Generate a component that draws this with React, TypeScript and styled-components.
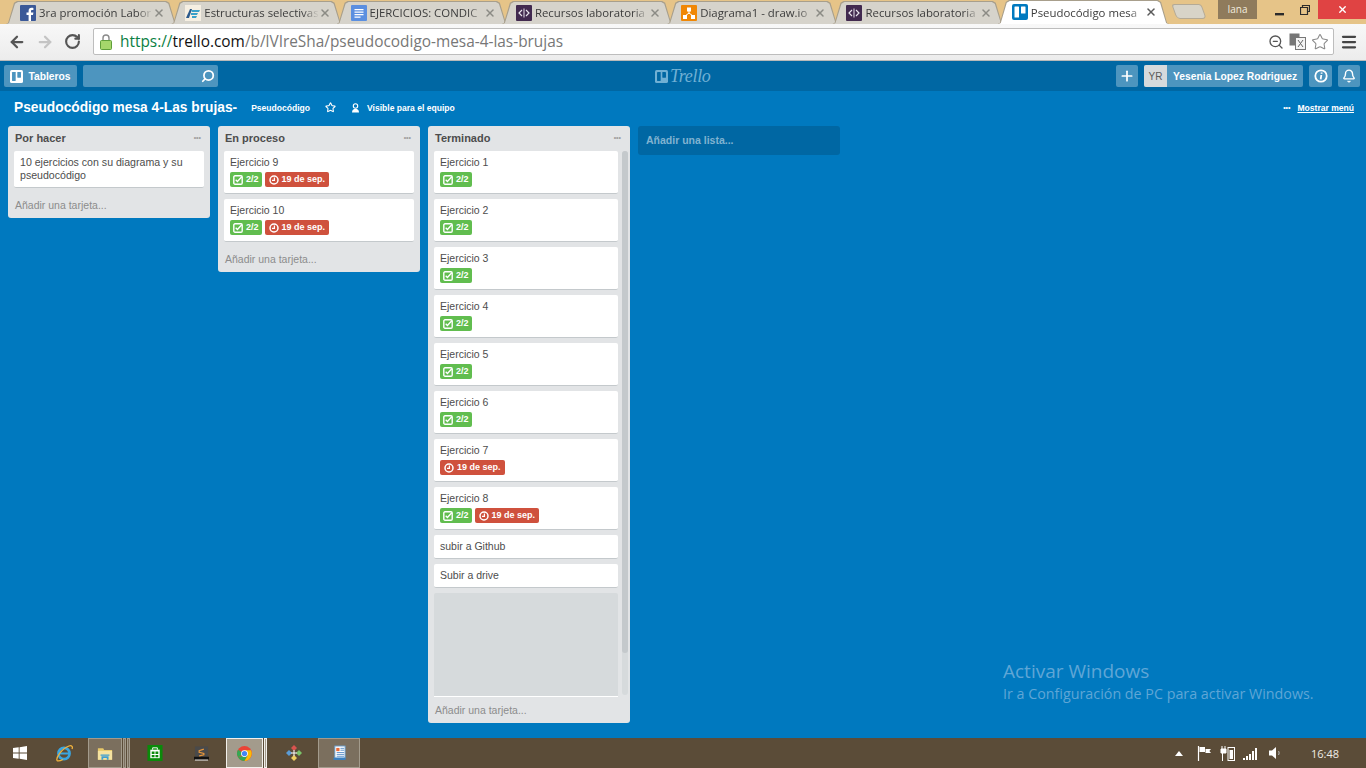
import * as React from 'react';
import styled, { createGlobalStyle } from 'styled-components';
import { Search, ZoomOut, Star, Menu, ArrowLeft, ArrowRight, RotateCw, Plus, Bell, X } from 'lucide-react';

const GlobalStyle = createGlobalStyle`
  html, body { margin: 0; padding: 0; height: 100%; overflow: hidden; }
  body { font-family: "Liberation Sans", Arial, sans-serif; background: #0079bf; }
  * { box-sizing: border-box; }
`;

const Page = styled.div`
  display: flex;
  flex-direction: column;
  width: 1366px;
  height: 768px;
  position: relative;
  overflow: hidden;
`;

/* ---------- browser chrome ---------- */

const TabStrip = styled.div`
  display: flex;
  align-items: flex-end;
  height: 24px;
  flex-shrink: 0;
  padding-left: 6px;
  background: #e6c488;
  position: relative;
`;

const TabItem = styled.div<{ $active?: boolean }>`
  position: relative;
  flex-shrink: 0;
  width: 171.3px;
  height: ${(p) => (p.$active ? '24px' : '23px')};
  margin-right: -6px;
  display: flex;
  align-items: center;
  padding: 0 12px 0 14px;
  z-index: ${(p) => (p.$active ? 2 : 1)};

  &::before,
  &::after {
    content: '';
    position: absolute;
    clip-path: polygon(0 100%, 2px 96%, 8px 8%, 11px 0, calc(100% - 11px) 0, calc(100% - 8px) 8%, calc(100% - 2px) 96%, 100% 100%);
    z-index: -1;
  }
  &::before {
    inset: 0;
    background: #a89f8c;
  }
  &::after {
    inset: 1px 1px 0 1px;
    background: ${(p) => (p.$active ? '#ffffff' : '#d6d3cb')};
  }
`;

const TabIcon = styled.span`
  display: flex;
  width: 16px;
  height: 16px;
  flex-shrink: 0;
  margin-right: 3px;
`;

const TabTitle = styled.span`
  flex: 1;
  min-width: 0;
  padding-right: 6px;
  font-family: "Open Sans", "Noto Sans", sans-serif;
  font-size: 11.4px;
  color: #3c3c3c;
  white-space: nowrap;
  overflow: hidden;
  -webkit-mask-image: linear-gradient(to right, #000 86%, transparent 100%);
  mask-image: linear-gradient(to right, #000 86%, transparent 100%);
`;

const TabClose = styled.span<{ $active?: boolean }>`
  display: flex;
  width: 12px;
  flex-shrink: 0;
  color: ${(p) => (p.$active ? '#5a5a5a' : '#8b8b85')};
`;

const NewTab = styled.div`
  flex-shrink: 0;
  width: 30px;
  height: 15px;
  margin: 0 0 5px 11px;
  background: #d8d4c8;
  border: 1px solid #b4aa96;
  border-radius: 3px 3px 4px 4px;
  transform: skewX(20deg);
`;

const WindowControls = styled.div`
  position: absolute;
  top: 0;
  right: 0;
  display: flex;
  align-items: flex-start;
`;

const ProfileBadge = styled.div`
  width: 39px;
  height: 19px;
  margin-right: 9px;
  background: #8f7b5c;
  color: #f2ecdf;
  font-family: "Open Sans", sans-serif;
  font-size: 10px;
  line-height: 18px;
  text-align: center;
`;

const WinButton = styled.div<{ $close?: boolean }>`
  display: flex;
  align-items: center;
  justify-content: center;
  width: ${(p) => (p.$close ? '48px' : '26px')};
  height: 19px;
  background: ${(p) => (p.$close ? '#e04343' : 'transparent')};
  color: ${(p) => (p.$close ? '#ffffff' : '#2b2b2b')};
`;

const Toolbar = styled.div`
  display: flex;
  align-items: center;
  height: 37px;
  flex-shrink: 0;
  padding: 0 8px 1px 8px;
  background: linear-gradient(#f8f8f8, #ececec);
  border-bottom: 1px solid #b9b9b9;
`;

const NavButton = styled.span<{ $disabled?: boolean }>`
  display: flex;
  width: 20px;
  margin-right: 8px;
  color: ${(p) => (p.$disabled ? '#c4c4c4' : '#555555')};
`;

const Omnibox = styled.div`
  flex: 1;
  display: flex;
  align-items: center;
  height: 27px;
  margin-left: 1px;
  padding: 0 4px 0 6px;
  background: #ffffff;
  border: 1px solid #bdbdbd;
  border-radius: 2px;
`;

const LockIcon = styled.span`
  display: flex;
  margin-right: 8px;
`;

const Url = styled.span`
  flex: 1;
  font-family: "Open Sans", "Noto Sans", sans-serif;
  font-size: 15.4px;
  color: #777777;
  white-space: nowrap;
`;

const UrlScheme = styled.span`
  color: #0b8043;
`;

const UrlHost = styled.span`
  color: #111111;
`;

const OmniIcons = styled.span`
  display: flex;
  align-items: center;
  gap: 5px;
  color: #555555;
`;

const TranslateIcon = styled.span`
  display: flex;
`;

const MenuButton = styled.span`
  display: flex;
  margin-left: 6px;
  color: #444444;
`;

/* ---------- trello header ---------- */

const AppHeader = styled.header`
  display: flex;
  align-items: center;
  justify-content: space-between;
  height: 30px;
  flex-shrink: 0;
  padding: 0 6px 0 4px;
  background: #0067a3;
  position: relative;
`;

const HeaderGroup = styled.div`
  display: flex;
  align-items: center;
  gap: 6px;
`;

const HeaderButton = styled.div<{ $width?: number }>`
  display: flex;
  align-items: center;
  justify-content: center;
  gap: 5px;
  height: 22px;
  width: ${(p) => (p.$width ? `${p.$width}px` : 'auto')};
  border-radius: 2px;
  background: #4d95bf;
  color: #ffffff;
  font-size: 10.3px;
  font-weight: 700;
  overflow: hidden;
`;

const SearchBox = styled(HeaderButton)`
  justify-content: flex-end;
  padding-right: 3px;
`;

const SearchGlyph = styled(Search)`
  transform: scaleX(-1);
`;

const Logo = styled.div`
  position: absolute;
  left: 655px;
  top: 7px;
  display: flex;
  align-items: center;
  gap: 2px;
  color: #70b0d4;
  font-family: "Liberation Serif", serif;
  font-style: italic;
  font-size: 18px;
  line-height: 16px;
  letter-spacing: -0.3px;
`;

const UserChip = styled(HeaderButton)`
  width: 159px;
  justify-content: flex-start;
  gap: 6px;
`;

const Initials = styled.span`
  display: flex;
  align-items: center;
  justify-content: center;
  width: 23px;
  height: 22px;
  background: #d6dadc;
  color: #5a5a5a;
  font-size: 10px;
  font-weight: 400;
`;

const BoardHeader = styled.div`
  display: flex;
  align-items: center;
  height: 35px;
  flex-shrink: 0;
  padding: 0 12px 2px 14px;
  background: #0079bf;
  color: #ffffff;
`;

const BoardTitle = styled.h1`
  margin: 0 14px 0 0;
  font-size: 13.75px;
  font-weight: 700;
`;

const BoardMeta = styled.span`
  display: flex;
  align-items: center;
  font-size: 8.55px;
  font-weight: 700;
`;

const StarSlot = styled.span`
  display: flex;
  margin: 0 15px 0 15px;
`;

const TeamSlot = styled.span`
  display: flex;
  margin-right: 7px;
`;

const MenuLink = styled.span`
  margin-left: auto;
  display: flex;
  align-items: center;
  gap: 7px;
  font-size: 8.55px;
  font-weight: 700;
`;

const MenuDots = styled.span`
  font-size: 7px;
`;

const MenuLinkText = styled.span`
  text-decoration: underline;
`;

/* ---------- board ---------- */

const Board = styled.main`
  flex: 1;
  display: flex;
  align-items: flex-start;
  gap: 8px;
  min-height: 0;
  padding: 0 8px 15px 8px;
  background: #0079bf;
`;

const ListWrap = styled.section<{ $fill?: boolean }>`
  display: flex;
  flex-direction: column;
  width: 202px;
  flex-shrink: 0;
  height: ${(p) => (p.$fill ? '100%' : 'auto')};
  background: #e2e4e6;
  border-radius: 3px;
`;

const ListHeader = styled.div`
  display: flex;
  align-items: center;
  justify-content: space-between;
  height: 25px;
  flex-shrink: 0;
  padding: 0 9px 2px 7px;
  font-size: 11px;
  font-weight: 700;
  color: #4d4d4d;
`;

const ListDots = styled.span`
  font-size: 7px;
  color: #a0a0a0;
  line-height: 6px;
`;

const ListBody = styled.div<{ $scroll?: boolean }>`
  display: flex;
  flex: ${(p) => (p.$scroll ? 1 : 'none')};
  min-height: 0;
  padding: 0 ${(p) => (p.$scroll ? '2px' : '6px')} 0 6px;
  gap: 4px;
`;

const CardColumn = styled.div`
  flex: 1;
  min-width: 0;
  display: flex;
  flex-direction: column;
  gap: 5px;
`;

const CardBox = styled.div`
  padding: 5px 6px 0 6px;
  min-height: 24px;
  background: #ffffff;
  border-radius: 2px;
  border-bottom: 1px solid #c4c9cc;
  font-size: 10.5px;
  line-height: 13px;
  color: #4d4d4d;
`;

const TallCard = styled(CardBox)`
  height: 43px;
`;

const WrappedCard = styled(CardBox)`
  height: 37px;
  font-size: 10.6px;
`;

const CardGhost = styled.div`
  flex: 1;
  background: #d6dadc;
  border-radius: 2px 2px 0 0;
  border-bottom: 1px solid #ffffff;
`;

const BadgeRow = styled.div`
  display: flex;
  gap: 3px;
  margin-top: 3px;
`;

const Badge = styled.span<{ $tone: 'green' | 'red' }>`
  display: flex;
  align-items: center;
  gap: 3px;
  height: 15px;
  padding: 0 ${(p) => (p.$tone === 'green' ? '3px' : '4px')};
  border-radius: 2px;
  background: ${(p) => (p.$tone === 'green' ? '#61bd4f' : '#cf513d')};
  color: #ffffff;
  font-size: 9px;
  font-weight: 700;
`;

const ScrollTrack = styled.div`
  display: flex;
  flex-direction: column;
  width: 6px;
  margin-bottom: 2px;
  background: #d6dadc;
  border-radius: 3px;
`;

const ScrollThumb = styled.div`
  height: 502px;
  background: #c4c9cc;
  border-radius: 3px;
`;

const AddCard = styled.div<{ $height: number; $drop?: number }>`
  display: flex;
  align-items: center;
  height: ${(p) => p.$height}px;
  flex-shrink: 0;
  padding: ${(p) => p.$drop ?? 0}px 7px 0 7px;
  font-size: 10.5px;
  color: #8c8c8c;
`;

const AddList = styled.div`
  display: flex;
  align-items: center;
  width: 202px;
  height: 29px;
  flex-shrink: 0;
  padding: 0 8px 2px 8px;
  background: #0067a3;
  border-radius: 3px;
  color: #80b3d1;
  font-size: 10.5px;
  font-weight: 700;
`;

/* ---------- watermark + taskbar ---------- */

const Watermark = styled.div`
  position: absolute;
  left: 1003px;
  top: 659px;
  font-family: "Open Sans", sans-serif;
  color: #5fa6d6;
`;

const WatermarkTitle = styled.div`
  font-size: 19px;
  line-height: 25px;
`;

const WatermarkText = styled.div`
  font-size: 14.3px;
  line-height: 20px;
`;

const Taskbar = styled.footer`
  display: flex;
  align-items: stretch;
  height: 30px;
  flex-shrink: 0;
  background: #5b4c38;
`;

const TaskSlot = styled.div<{ $width: number; $state?: 'open' | 'active' }>`
  display: flex;
  align-items: center;
  justify-content: center;
  width: ${(p) => p.$width}px;
  flex-shrink: 0;
  background: ${(p) => (p.$state === 'active' ? '#a39b8c' : p.$state === 'open' ? '#7b6f5e' : 'transparent')};
  border: ${(p) => (p.$state === 'active' ? '1px solid #f2f0ec' : p.$state === 'open' ? '1px solid #a39b8c' : 'none')};
`;

const TaskEdge = styled.div<{ $light?: boolean }>`
  width: 3px;
  margin-left: 1px;
  flex-shrink: 0;
  background: ${(p) => (p.$light ? '#a39b8c' : '#7b6f5e')};
  border: 1px solid ${(p) => (p.$light ? '#f2f0ec' : '#a39b8c')};
`;

const TaskSpacer = styled.div<{ $width: number }>`
  width: ${(p) => p.$width}px;
  flex-shrink: 0;
`;

const Tray = styled.div`
  margin-left: auto;
  display: flex;
  align-items: center;
  color: #ffffff;
`;

const TrayIcon = styled.span<{ $gap: number }>`
  display: flex;
  margin-right: ${(p) => p.$gap}px;
`;

const Clock = styled.span`
  width: 55px;
  font-family: "Open Sans", sans-serif;
  font-size: 11px;
  color: #f0ede6;
`;

/* ---------- drawings ---------- */

const TrelloMark: React.FC<{ size: number; bg: string; fg: string }> = ({ size, bg, fg }) => (
  <svg width={size} height={size} viewBox="0 0 16 16">
    <rect width="16" height="16" rx="2" fill={bg} />
    <rect x="2.5" y="2.5" width="4.5" height="11" rx="0.5" fill={fg} />
    <rect x="9" y="2.5" width="4.5" height="7" rx="0.5" fill={fg} />
  </svg>
);

const FacebookIcon = () => (
  <svg width="16" height="16" viewBox="0 0 16 16">
    <rect width="16" height="16" rx="1" fill="#3b5998" />
    <path d="M11 16v-6h2l.4-2.4H11V6.2c0-.8.3-1.2 1.2-1.2h1.2V2.9c-.5-.1-1.2-.1-1.8-.1-1.9 0-3 1.1-3 3.1v1.7H6.5V10h2.1v6z" fill="#ffffff" />
  </svg>
);

const StructIcon = () => (
  <svg width="16" height="16" viewBox="0 0 16 16">
    <rect width="16" height="16" fill="#f6efe2" />
    <path d="M1 13 5 4h2L4 13z" fill="#2c5a8c" />
    <path d="M6 5h9l-1 2H7zM6 8h7l-1 2H6zM7 11h5l-1 2H7z" fill="#39a0c8" />
  </svg>
);

const DocsIcon = () => (
  <svg width="16" height="16" viewBox="0 0 16 16">
    <rect width="16" height="16" rx="1" fill="#5b8fe0" />
    <path d="M3.5 4h9v1.2h-9zM3.5 6.5h9v1.2h-9zM3.5 9h9v1.2h-9zM3.5 11.5h6v1.2h-6z" fill="#ffffff" />
  </svg>
);

const CodeIcon = () => (
  <svg width="16" height="16" viewBox="0 0 16 16">
    <rect width="16" height="16" rx="1" fill="#41294f" />
    <path d="M6 5 3 8l3 3M10 5l3 3-3 3" fill="none" stroke="#e8e4ec" strokeWidth="1.2" />
    <path d="M8 3.5v9" stroke="#e8e4ec" strokeWidth="1" />
  </svg>
);

const DrawioIcon = () => (
  <svg width="16" height="16" viewBox="0 0 16 16">
    <rect width="16" height="16" rx="1" fill="#f08705" />
    <path d="M8 6v3M8 8l-4 3M8 8l4 3" stroke="#ffffff" strokeWidth="1" fill="none" />
    <rect x="6" y="2.5" width="4" height="4" fill="#ffffff" />
    <rect x="2" y="10" width="4" height="4" fill="#ffffff" />
    <rect x="10" y="10" width="4" height="4" fill="#ffffff" />
  </svg>
);

const PadlockIcon = () => (
  <svg width="12" height="16" viewBox="0 0 12 16">
    <path d="M3 7V4a3 3 0 0 1 6 0v3" fill="none" stroke="#8a8a8a" strokeWidth="1.4" />
    <rect x="0.5" y="6.5" width="11" height="9" rx="1" fill="#a5d66b" stroke="#5f9e3a" />
  </svg>
);

const CheckIcon = () => (
  <svg width="10" height="10" viewBox="0 0 10 10">
    <rect x="0.8" y="0.8" width="8.4" height="8.4" rx="1.2" fill="none" stroke="#fff" strokeWidth="1.4" />
    <path d="M2.7 4.8 4.4 6.4 8.8 1.8" fill="none" stroke="#fff" strokeWidth="1.4" />
  </svg>
);

const ClockIcon = () => (
  <svg width="10" height="10" viewBox="0 0 10 10">
    <circle cx="5" cy="5" r="4" fill="none" stroke="#fff" strokeWidth="1.5" />
    <path d="M5.4 2.4V5.4H3" fill="none" stroke="#fff" strokeWidth="1.2" />
  </svg>
);

const TeamIcon = () => (
  <svg width="9" height="10" viewBox="0 0 9 10">
    <circle cx="4.5" cy="3" r="2.2" fill="none" stroke="#fff" strokeWidth="1.1" />
    <path d="M1 9.5C1 7 2.5 5.8 4.5 5.8S8 7 8 9.5z" fill="#fff" />
  </svg>
);

const InfoIcon = () => (
  <svg width="14" height="14" viewBox="0 0 14 14">
    <circle cx="7" cy="7" r="5.7" fill="none" stroke="#fff" strokeWidth="1.8" />
    <path d="M7.6 3.4v1.4M7.3 6 6.7 10.4" stroke="#fff" strokeWidth="1.8" />
  </svg>
);

const WindowsLogo = () => (
  <svg width="14" height="14" viewBox="0 0 14 14">
    <path d="M0 2.1 5.7 1.3V6.6H0zM6.6 1.2 14 0V6.6H6.6zM0 7.4H5.7V12.7L0 11.9zM6.6 7.4H14V14L6.6 12.8z" fill="#ffffff" />
  </svg>
);

const IeIcon = () => (
  <svg width="17" height="17" viewBox="2 2 17 17">
    <circle cx="10" cy="10.5" r="5.6" fill="none" stroke="#3aa5e0" strokeWidth="2.6" />
    <path d="M5 10.5h10" stroke="#3aa5e0" strokeWidth="2" />
    <path d="M3 17.5C2 15 7 6 15 3c3-1 4 1 3 3M3 17.5c1 1 4 0 6-1" fill="none" stroke="#f2b33d" strokeWidth="1.3" />
  </svg>
);

const ExplorerIcon = () => (
  <svg width="16" height="15" viewBox="0 0 18 16">
    <path d="M1 2h6l1 2h9v11H1z" fill="#e8c868" />
    <path d="M1 5h16v10H1z" fill="#f6e3a0" />
    <path d="M5 15v-4h8v4h-2v-2H7v2zM4 9h10v1.5H4z" fill="#3f9fd0" />
  </svg>
);

const StoreIcon = () => (
  <svg width="16" height="16" viewBox="0 0 16 17">
    <rect width="16" height="17" fill="#0a8a0a" />
    <path d="M3 5h10v9H3z" fill="#ffffff" />
    <path d="M4.5 7h3v2.5h-3zM8.5 7h3v2.5h-3zM4.5 10.5h3V13h-3zM8.5 10.5h3V13h-3z" fill="#0a8a0a" />
    <path d="M5.5 5V3h5v2" fill="none" stroke="#ffffff" strokeWidth="1" />
  </svg>
);

const SublimeIcon = () => (
  <svg width="15" height="15" viewBox="0 0 16 15">
    <rect x="1" y="0" width="14" height="11" fill="#4a4a4a" />
    <rect x="0" y="11" width="16" height="3" fill="#111111" />
    <rect x="1" y="14" width="14" height="1" fill="#eeeeee" />
    <path d="M10.5 2.8 5.5 4.4v1.8l5 1.3v1.4L5.5 10" fill="none" stroke="#e8963a" strokeWidth="1.3" />
  </svg>
);

const ChromeIcon = () => (
  <svg width="15" height="15" viewBox="0 0 16 16">
    <circle cx="8" cy="8" r="8" fill="#ea4335" />
    <path d="M8 8 1.1 12A8 8 0 0 1 1.1 4L4.5 6z" fill="#34a853" />
    <path d="M1.1 12A8 8 0 0 0 8 16l3.4-6H8z" fill="#34a853" />
    <path d="M8 4.5h6.9A8 8 0 0 1 8 16l3.4-6z" fill="#fbbc05" />
    <circle cx="8" cy="8" r="3.6" fill="#ffffff" />
    <circle cx="8" cy="8" r="2.8" fill="#4285f4" />
  </svg>
);

const GitIcon = () => (
  <svg width="16" height="16" viewBox="0 0 16 16">
    <path d="M8 0 11 3 8 6 5 3z" fill="#d9534f" />
    <path d="M3 5 6 8 3 11 0 8z" fill="#5b9bd5" />
    <path d="M13 5 16 8 13 11 10 8z" fill="#7cc36a" />
    <path d="M8 10 11 13 8 16 5 13z" fill="#f0d060" />
    <path d="M8 5v6M5 8h6" stroke="#ffffff" strokeWidth="1" />
  </svg>
);

const WriterIcon = () => (
  <svg width="13" height="16" viewBox="0 0 14 16">
    <rect x="2" y="0.5" width="11" height="13" fill="#ffffff" stroke="#6aa0d0" />
    <rect x="0.5" y="13" width="13" height="2.5" fill="#3a80c0" />
    <rect x="3.5" y="2.5" width="3.5" height="3.5" fill="#e86a3a" />
    <path d="M8 3h4M8 5h4M4 7.5h8M4 9.5h8M4 11.5h8" stroke="#5a90c8" strokeWidth="1" />
  </svg>
);

const FlagIcon = () => (
  <svg width="14" height="15" viewBox="0 0 14 15">
    <path d="M1.5 0v15" stroke="#fff" strokeWidth="1.2" />
    <path d="M2.5 1H8v5H2.5zM8.5 3H14l-1.6 2L14 7H8.5z" fill="#fff" />
  </svg>
);

const PowerIcon = () => (
  <svg width="15" height="15" viewBox="0 0 15 15">
    <path d="M1 3h5v4H1zM2.5 7v8M2 0v3M5 0v3" stroke="#fff" fill="#fff" strokeWidth="1" />
    <rect x="8" y="1.5" width="6.5" height="13" fill="none" stroke="#fff" strokeWidth="1" />
    <rect x="9.5" y="4" width="3.5" height="9" fill="#fff" />
  </svg>
);

const SignalIcon = () => (
  <svg width="15" height="13" viewBox="0 0 15 13">
    <path d="M0 11h2v2H0zM3 9h2v4H3zM6 7h2v6H6zM9 4h2v9H9zM12 1h2v12h-2z" fill="#fff" />
  </svg>
);

const SpeakerIcon = () => (
  <svg width="13" height="14" viewBox="0 0 13 14">
    <path d="M0 4.5h3L7 1v12L3 9.5H0z" fill="#fff" />
    <path d="M9.5 5c.8 1.2.8 2.8 0 4" fill="none" stroke="#bbb" strokeWidth="1" />
  </svg>
);

/* ---------- data ---------- */

type CardData = { title: string; check?: boolean; due?: boolean };

const tabs: { id: string; title: string; icon: React.ReactNode; active?: boolean }[] = [
  { id: 'fb', title: '3ra promoción Labor', icon: <FacebookIcon /> },
  { id: 'est', title: 'Estructuras selectivas', icon: <StructIcon /> },
  { id: 'doc', title: 'EJERCICIOS: CONDIC', icon: <DocsIcon /> },
  { id: 'res1', title: 'Recursos laboratoria', icon: <CodeIcon /> },
  { id: 'draw', title: 'Diagrama1 - draw.io', icon: <DrawioIcon /> },
  { id: 'res2', title: 'Recursos laboratoria', icon: <CodeIcon /> },
  { id: 'trello', title: 'Pseudocódigo mesa', icon: <TrelloMark size={16} bg="#0079bf" fg="#ffffff" />, active: true },
];

const doing: CardData[] = [
  { title: 'Ejercicio 9', check: true, due: true },
  { title: 'Ejercicio 10', check: true, due: true },
];

const done: CardData[] = [
  { title: 'Ejercicio 1', check: true },
  { title: 'Ejercicio 2', check: true },
  { title: 'Ejercicio 3', check: true },
  { title: 'Ejercicio 4', check: true },
  { title: 'Ejercicio 5', check: true },
  { title: 'Ejercicio 6', check: true },
  { title: 'Ejercicio 7', due: true },
  { title: 'Ejercicio 8', check: true, due: true },
  { title: 'subir a Github' },
  { title: 'Subir a drive' },
];

const Card: React.FC<{ card: CardData }> = ({ card }) => {
  if (!card.check && !card.due) {
    return <CardBox>{card.title}</CardBox>;
  }
  return (
    <TallCard>
      {card.title}
      <BadgeRow>
        {card.check && (
          <Badge $tone="green">
            <CheckIcon />
            2/2
          </Badge>
        )}
        {card.due && (
          <Badge $tone="red">
            <ClockIcon />
            19 de sep.
          </Badge>
        )}
      </BadgeRow>
    </TallCard>
  );
};

const ListHead: React.FC<{ title: string }> = ({ title }) => (
  <ListHeader>
    {title}
    <ListDots>•••</ListDots>
  </ListHeader>
);

export default function App() {
  return (
    <Page>
      <GlobalStyle />
      <TabStrip>
        {tabs.map((tab) => (
          <TabItem key={tab.id} $active={tab.active}>
            <TabIcon>{tab.icon}</TabIcon>
            <TabTitle>{tab.title}</TabTitle>
            <TabClose $active={tab.active}>
              <X size={12} strokeWidth={3} />
            </TabClose>
          </TabItem>
        ))}
        <NewTab />
        <WindowControls>
          <ProfileBadge>Iana</ProfileBadge>
          <WinButton>
            <svg width="9" height="12" viewBox="0 0 9 12">
              <rect x="0" y="9" width="9" height="2.4" fill="currentColor" />
            </svg>
          </WinButton>
          <WinButton>
            <svg width="10" height="10" viewBox="0 0 10 10">
              <path d="M2.5 2.5V.5h7v6h-2M.5 2.5h7v7h-7z" fill="none" stroke="currentColor" strokeWidth="1.2" />
            </svg>
          </WinButton>
          <WinButton $close>
            <X size={11} strokeWidth={3} />
          </WinButton>
        </WindowControls>
      </TabStrip>

      <Toolbar>
        <NavButton>
          <ArrowLeft size={18} strokeWidth={3} />
        </NavButton>
        <NavButton $disabled>
          <ArrowRight size={18} strokeWidth={3} />
        </NavButton>
        <NavButton>
          <RotateCw size={17} strokeWidth={3} />
        </NavButton>
        <Omnibox>
          <LockIcon>
            <PadlockIcon />
          </LockIcon>
          <Url>
            <UrlScheme>https://</UrlScheme>
            <UrlHost>trello.com</UrlHost>/b/lVIreSha/pseudocodigo-mesa-4-las-brujas
          </Url>
          <OmniIcons>
            <ZoomOut size={16} strokeWidth={2} />
            <TranslateIcon>
              <svg width="17" height="17" viewBox="0 0 17 17">
                <rect x="0.5" y="0.5" width="10" height="12" fill="#777" />
                <rect x="6.5" y="4.5" width="10" height="12" fill="#f4f4f4" stroke="#777" />
                <path d="M9 7l5 7M14 7l-5 7" stroke="#666" strokeWidth="1" />
              </svg>
            </TranslateIcon>
            <Star size={18} strokeWidth={1.4} color="#8a8a8a" />
          </OmniIcons>
        </Omnibox>
        <MenuButton>
          <Menu size={18} strokeWidth={3} />
        </MenuButton>
      </Toolbar>

      <AppHeader>
        <HeaderGroup>
          <HeaderButton $width={73}>
            <TrelloMark size={13} bg="#ffffff" fg="#4d95bf" />
            Tableros
          </HeaderButton>
          <SearchBox $width={135}>
            <SearchGlyph size={14} strokeWidth={3} />
          </SearchBox>
        </HeaderGroup>
        <Logo>
          <TrelloMark size={13} bg="#70b0d4" fg="#0067a3" />
          Trello
        </Logo>
        <HeaderGroup>
          <HeaderButton $width={22}>
            <Plus size={16} strokeWidth={2.6} />
          </HeaderButton>
          <UserChip>
            <Initials>YR</Initials>
            Yesenia Lopez Rodriguez
          </UserChip>
          <HeaderButton $width={23}>
            <InfoIcon />
          </HeaderButton>
          <HeaderButton $width={22}>
            <Bell size={14} strokeWidth={2.4} />
          </HeaderButton>
        </HeaderGroup>
      </AppHeader>

      <BoardHeader>
        <BoardTitle>Pseudocódigo mesa 4-Las brujas-</BoardTitle>
        <BoardMeta>Pseudocódigo</BoardMeta>
        <StarSlot>
          <Star size={11} strokeWidth={2.4} />
        </StarSlot>
        <TeamSlot>
          <TeamIcon />
        </TeamSlot>
        <BoardMeta>Visible para el equipo</BoardMeta>
        <MenuLink>
          <MenuDots>•••</MenuDots>
          <MenuLinkText>Mostrar menú</MenuLinkText>
        </MenuLink>
      </BoardHeader>

      <Board>
        <ListWrap>
          <ListHead title="Por hacer" />
          <ListBody>
            <CardColumn>
              <WrappedCard>10 ejercicios con su diagrama y su pseudocódigo</WrappedCard>
            </CardColumn>
          </ListBody>
          <AddCard $height={30} $drop={4}>Añadir una tarjeta...</AddCard>
        </ListWrap>

        <ListWrap>
          <ListHead title="En proceso" />
          <ListBody>
            <CardColumn>
              {doing.map((card) => (
                <Card key={card.title} card={card} />
              ))}
            </CardColumn>
          </ListBody>
          <AddCard $height={30} $drop={4}>Añadir una tarjeta...</AddCard>
        </ListWrap>

        <ListWrap $fill>
          <ListHead title="Terminado" />
          <ListBody $scroll>
            <CardColumn>
              {done.map((card) => (
                <Card key={card.title} card={card} />
              ))}
              <CardGhost />
            </CardColumn>
            <ScrollTrack>
              <ScrollThumb />
            </ScrollTrack>
          </ListBody>
          <AddCard $height={26}>Añadir una tarjeta...</AddCard>
        </ListWrap>

        <AddList>Añadir una lista...</AddList>
      </Board>

      <Watermark>
        <WatermarkTitle>Activar Windows</WatermarkTitle>
        <WatermarkText>Ir a Configuración de PC para activar Windows.</WatermarkText>
      </Watermark>

      <Taskbar>
        <TaskSlot $width={40}>
          <WindowsLogo />
        </TaskSlot>
        <TaskSlot $width={48}>
          <IeIcon />
        </TaskSlot>
        <TaskSlot $width={34} $state="open">
          <ExplorerIcon />
        </TaskSlot>
        <TaskEdge />
        <TaskEdge />
        <TaskSpacer $width={2} />
        <TaskSlot $width={46}>
          <StoreIcon />
        </TaskSlot>
        <TaskSlot $width={47}>
          <SublimeIcon />
        </TaskSlot>
        <TaskSpacer $width={1} />
        <TaskSlot $width={37} $state="active">
          <ChromeIcon />
        </TaskSlot>
        <TaskEdge $light />
        <TaskSpacer $width={3} />
        <TaskSlot $width={47}>
          <GitIcon />
        </TaskSlot>
        <TaskSpacer $width={1} />
        <TaskSlot $width={42} $state="open">
          <WriterIcon />
        </TaskSlot>
        <Tray>
          <TrayIcon $gap={14}>
            <svg width="8" height="5" viewBox="0 0 8 5">
              <path d="M4 0 8 5H0z" fill="#fff" />
            </svg>
          </TrayIcon>
          <TrayIcon $gap={9}>
            <FlagIcon />
          </TrayIcon>
          <TrayIcon $gap={8}>
            <PowerIcon />
          </TrayIcon>
          <TrayIcon $gap={11}>
            <SignalIcon />
          </TrayIcon>
          <TrayIcon $gap={29}>
            <SpeakerIcon />
          </TrayIcon>
          <Clock>16:48</Clock>
        </Tray>
      </Taskbar>
    </Page>
  );
}
